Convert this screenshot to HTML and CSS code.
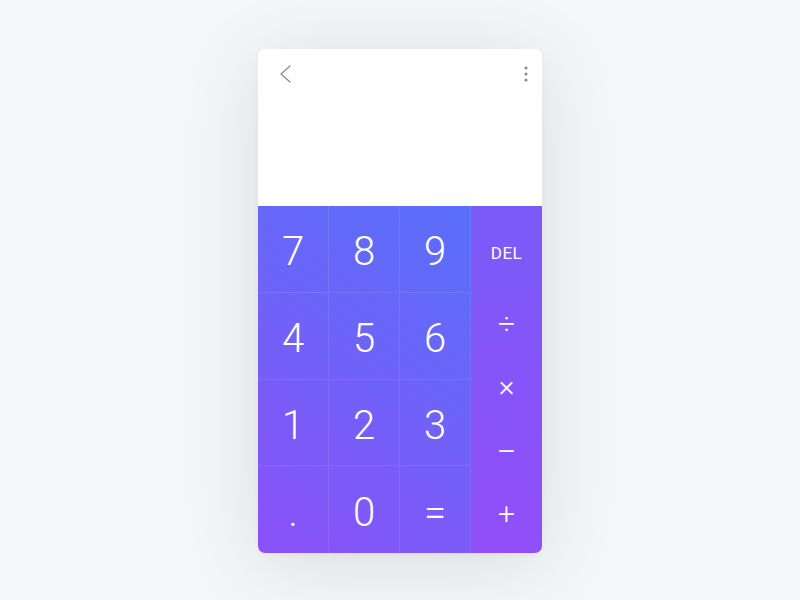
FILE: index.html
```html
<!DOCTYPE html>
<html lang="en">
<head>
    <meta charset="UTF-8">
    <meta name="viewport" content="width=device-width, initial-scale=1.0">
    <title>Calculator</title>
    <link rel="stylesheet" href="styles.css">
</head>
<body>
    <div class="calc">
        <div class="screen">
            <div class="topbar">
                <button class="icon-btn" aria-label="Back">
                    <svg width="14" height="20" viewBox="0 0 14 20">
                        <polyline points="11,2 2,10 11,18" fill="none" stroke="#8c8c8c" stroke-width="1.3" stroke-linecap="round" stroke-linejoin="round"/>
                    </svg>
                </button>
                <button class="icon-btn" aria-label="More">
                    <svg width="6" height="20" viewBox="0 0 6 20">
                        <circle cx="3" cy="4" r="1.6" fill="#8c8c8c"/>
                        <circle cx="3" cy="10" r="1.6" fill="#8c8c8c"/>
                        <circle cx="3" cy="16" r="1.6" fill="#8c8c8c"/>
                    </svg>
                </button>
            </div>
            <div id="display" class="display"></div>
        </div>

        <div class="keypad">
            <div class="digits">
                <button class="key">7</button>
                <button class="key">8</button>
                <button class="key">9</button>
                <button class="key">4</button>
                <button class="key">5</button>
                <button class="key">6</button>
                <button class="key">1</button>
                <button class="key">2</button>
                <button class="key">3</button>
                <button class="key">.</button>
                <button class="key">0</button>
                <button class="key">=</button>
            </div>
            <div class="ops">
                <button class="op del">DEL</button>
                <button class="op div">÷</button>
                <button class="op">×</button>
                <button class="op minus">−</button>
                <button class="op plus">+</button>
            </div>
        </div>
    </div>
</body>
</html>
```

FILE: styles.css
```css
body {
    margin: 0;
    background-color: #f5f6f8;
    font-family: Roboto, "Liberation Sans", Arial, sans-serif;
    display: flex;
    justify-content: center;
    padding-top: 49px;
    height: 600px;
    box-sizing: border-box;
}
button {
    border: none;
    background: none;
    padding: 0;
    margin: 0;
    font-family: inherit;
    color: #fff;
    cursor: pointer;
}
.calc {
    width: 284px;
    height: 504px;
    border-radius: 7px;
    overflow: hidden;
    background-color: #fff;
    box-shadow: 0 10px 80px rgba(0, 0, 0, 0.11), 0 2px 6px rgba(0, 0, 0, 0.03);
    display: flex;
    flex-direction: column;
}
.screen {
    height: 157px;
    background-color: #fff;
}
.topbar {
    display: flex;
    justify-content: space-between;
    align-items: center;
    padding: 15px 13px 0 21px;
}
.icon-btn {
    display: flex;
    line-height: 0;
}
.keypad {
    flex: 1;
    display: flex;
}
.digits {
    width: 213px;
    display: grid;
    grid-template-columns: 71px 71px 71px;
    grid-template-rows: repeat(4, 1fr);
    background: linear-gradient(215deg, #586ffa 0%, #6e63f9 45%, #8b51f8 100%);
}
.key {
    font-size: 40px;
    font-weight: 300;
    border-right: 1px solid rgba(255, 255, 255, 0.09);
    border-bottom: 1px solid rgba(255, 255, 255, 0.09);
    display: flex;
    align-items: center;
    justify-content: center;
    padding-top: 6px;
}
.key:nth-child(n+10) {
    border-bottom: none;
}
.ops {
    flex: 1;
    display: flex;
    flex-direction: column;
    padding-top: 16px;
    background: linear-gradient(180deg, #7a5bf8 0%, #914ef9 100%);
}
.op {
    height: 62px;
    flex-shrink: 0;
    font-size: 30px;
    font-weight: 300;
    display: flex;
    align-items: center;
    justify-content: center;
}
.op.del {
    font-size: 17px;
    font-weight: 400;
    letter-spacing: 0.5px;
}
.op.div {
    margin-top: 8px;
}
.op.minus {
    font-size: 36px;
    padding-top: 9px;
}
.op.plus {
    margin-top: 4px;
}
```
